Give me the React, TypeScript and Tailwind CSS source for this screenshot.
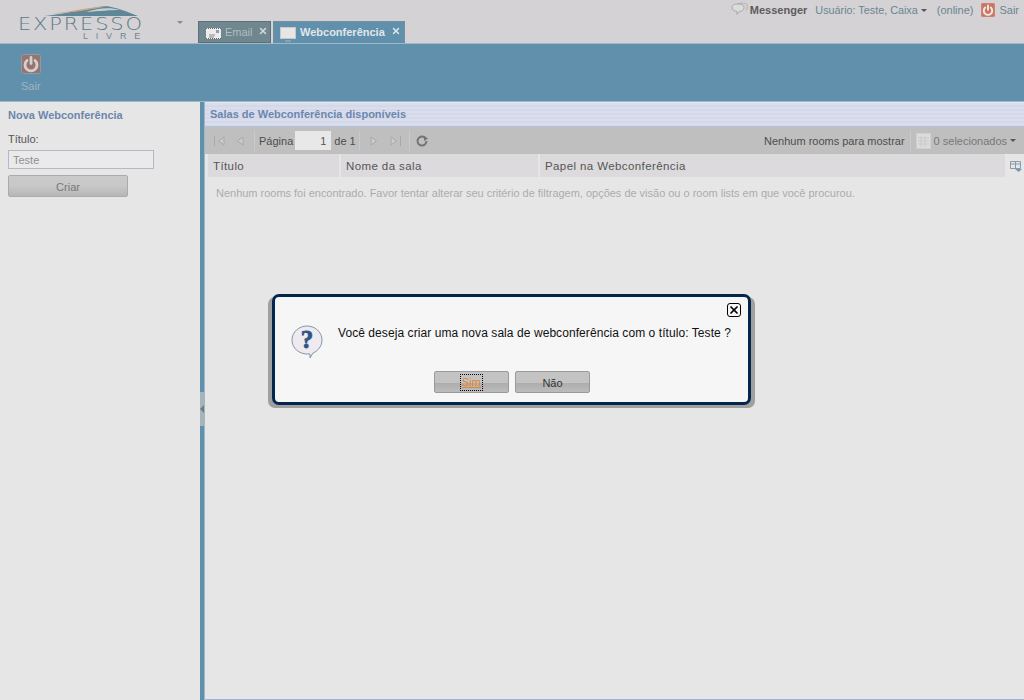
import { X } from 'lucide-react';

const font = "font-['Liberation_Sans',Arial,sans-serif]";

function PowerIcon({ size, bg, fg = '#e4dcda', edge }: { size: number; bg: string; fg?: string; edge?: string }) {
  return (
    <svg width={size} height={size} viewBox="0 0 20 20" className="shrink-0">
      <rect x="0.500" y="0.500" width="19" height="19" rx="2" fill={bg} stroke={edge ?? bg} />
      <path d="M6 6.500a6 6 0 1 0 8 0" fill="none" stroke={fg} strokeWidth="2.800" strokeLinecap="round" />
      <path d="M10 3.500v6" fill="none" stroke={fg} strokeWidth="2.800" strokeLinecap="round" />
    </svg>
  );
}

function Logo() {
  return (
    <div className="relative w-[125px] h-[38px] ml-[20px] mt-[5px] shrink-0">
      <svg width="125" height="12" viewBox="0 0 125 12" className="absolute left-0 top-0">
        <path d="M25 11 C50 8 70 3 85 1 C96 2 108 7 118 11 Z" fill="#5f8797" />
        <path d="M32 9 C52 6 72 2 88 1 C76 4 56 7 32 9 Z" fill="#cda27f" />
        <path d="M66 7 C78 3 90 2 100 5 C90 5 80 6 66 7 Z" fill="#c4d2d6" />
      </svg>
      <div className="absolute left-[-2px] top-[13px] w-[127px] text-[21px] leading-[14px] tracking-[1.800px] font-['DejaVu_Sans',sans-serif] font-extralight text-[#587a88] [transform:scaleY(0.86)] [transform-origin:left_top]">EXPRESSO</div>
      <div className="absolute left-[63px] top-[26px] text-[9px] leading-[10px] tracking-[7.800px] text-[#6d8794]">LIVRE</div>
    </div>
  );
}

function PagerIcon({ d }: { d: string }) {
  return (
    <svg width="16" height="16" viewBox="0 0 16 16" className="shrink-0">
      <path d={d} fill="#cdcccd" stroke="#a9a8a9" strokeWidth="1" />
    </svg>
  );
}

function Sep() {
  return <div className="w-px h-[20px] bg-[#cbcacb] shrink-0" />;
}

export default function App() {
  return (
    <div className={`${font} relative w-[1024px] h-[700px] overflow-hidden flex flex-col bg-[#e6e6e6] text-[12px]`}>
      {/* Top bar */}
      <header className="relative h-[43px] bg-[#d4d2d4] flex shrink-0">
        <Logo />
        <div className="ml-[32px] mt-[21px] w-0 h-0 border-x-[3px] border-x-transparent border-t-[3px] border-t-[#8a8a8a]" />
        <div className="ml-[15px] mt-[21px] flex gap-[2px] h-[22px]">
          <div className="w-[73px] bg-[#6f878f] border border-[#5e7076] flex items-center pl-[7px] text-[#b3bcc0] text-[11px]">
            <svg width="15" height="11" viewBox="0 0 15 11" className="shrink-0 mt-[3px]">
              <rect width="15" height="11" fill="#ececec" />
              <path d="M0 0.500h15M0 10.500h15" stroke="#8a5a66" strokeDasharray="1 1" />
              <rect x="10" y="2" width="3" height="3" fill="#8aa0b8" />
              <path d="M3 7h6M3 9h5" stroke="#888" />
            </svg>
            <span className="ml-[4px]">Email</span>
            <X size={10} strokeWidth={3.5} className="ml-[5px] mb-[3px] text-[#d5d9db]" />
          </div>
          <div className="w-[132px] bg-[#6190ac] border border-[#75909b] border-b-0 flex items-center pl-[6px] text-[#e2e6ea] font-bold text-[11px]">
            <svg width="17" height="15" viewBox="0 0 17 15" className="shrink-0 mt-[3px]">
              <rect x="0.500" y="0.500" width="15" height="11" fill="#e6e6e6" stroke="#c8c8c8" />
              <path d="M5 14h6" stroke="#a9bac4" />
            </svg>
            <span className="ml-[3px]">Webconferência</span>
            <X size={10} strokeWidth={3.5} className="ml-[6px] mb-[3px] text-[#e2e6ea]" />
          </div>
        </div>
        <div className="absolute right-[5px] top-[2px] flex items-center h-[16px] text-[#6b8493] text-[11px]">
          <svg width="17" height="16" viewBox="0 0 17 16" className="shrink-0">
            <path d="M6 2.500C7 1 15 0.500 16 2.500c0.500 2 0.500 5-1 6" fill="none" stroke="#b5b5b5" />
            <path d="M1 5c0-2 2-3 6-3s6 1 6 3.500-2 4-5 4l-2 3 0-3C3 9 1 8 1 5z" fill="#dcdcdc" stroke="#a9a9a9" />
          </svg>
          <span className="ml-[2px] font-bold text-[#5c5c5c]">Messenger</span>
          <span className="ml-[8px] text-[10.800px]">Usuário: Teste, Caixa</span>
          <span className="ml-[3px] w-0 h-0 border-x-[3px] border-x-transparent border-t-[3px] border-t-[#555]" />
          <span className="ml-[10px]">(online)</span>
          <span className="ml-[8px]"><PowerIcon size={14} bg="#cc7565" fg="#f1e7e3" /></span>
          <span className="ml-[4px]">Sair</span>
        </div>
      </header>

      {/* Module toolbar */}
      <div className="h-[59px] shrink-0 bg-[#6190ac] border-y border-[#9db8ca] pl-[21px] pt-[10px]">
        <PowerIcon size={20} bg="#96746f" fg="#d6cfce" edge="#8f9ba4" />
        <div className="text-[#9cb6c6] mt-[5px] text-[11px] leading-[14px]">Sair</div>
      </div>

      {/* Body */}
      <div className="flex-1 flex min-h-0">
        <aside className="w-[200px] shrink-0 bg-[#e6e6e6] pl-[8px] pt-[6px] text-[11px]">
          <h2 className="font-bold text-[#6c87ad] leading-[14px]">Nova Webconferência</h2>
          <div className="mt-[10px] text-[#555] leading-[14px]">Título:</div>
          <div className="mt-[4px] w-[146px] h-[19px] border border-[#b6b6c6] bg-[#eaeaea] text-[#8f8f8f] leading-[18px] pl-[4px]">Teste</div>
          <div className="mt-[6px] w-[120px] h-[22px] rounded-[2px] border border-[#ababab] bg-[linear-gradient(#cbcaca_0%,#c9c8c8_50%,#b8b7b7_100%)] text-center text-[#777] pt-[1px] leading-[21px]">Criar</div>
        </aside>

        {/* Splitter */}
        <div className="relative w-[5px] shrink-0 bg-[#6190ac] border-r border-r-[#9db8ca]">
          <div className="absolute left-0 top-[290px] w-[5px] h-[34px] bg-[#a6b4bb] flex items-center">
            <div className="w-0 h-0 border-y-[4px] border-y-transparent border-r-[4px] border-r-[#6e7c84]" />
          </div>
        </div>

        <main className="flex-1 min-w-0 flex flex-col border-b border-[#9fb4da] text-[11px]">
          <div className="h-[24px] shrink-0 mt-[1px] border-b border-[#b7c3dc] bg-[repeating-linear-gradient(#dadeec_0px,#dadeec_2px,#d3d8ea_2px,#d3d8ea_4px)] text-[#6c87ad] font-bold leading-[22px] pl-[5px]">
            Salas de Webconferência disponíveis
          </div>
          <div className="h-[27px] shrink-0 bg-[#c0bfc0] flex items-center pl-[7px] pr-[8px] text-[#4d4d4d]">
            <PagerIcon d="M2.500 3v10M12 4v8L6.500 8z" />
            <div className="w-[4px]" />
            <PagerIcon d="M11 4v8L5.500 8z" />
            <div className="w-[6px]" />
            <Sep />
            <span className="ml-[4px] mt-[1px]">Página</span>
            <div className="ml-[2px] w-[36px] h-[19px] bg-[#e8e8e8] text-right pr-[5px] leading-[20px] text-[#555]">1</div>
            <span className="ml-[3px] mt-[1px]">de 1</span>
            <div className="w-[3px]" />
            <Sep />
            <div className="w-[6px]" />
            <PagerIcon d="M5 4v8L10.500 8z" />
            <div className="w-[5px]" />
            <PagerIcon d="M4 4v8L9.500 8zM13.500 3v10" />
            <div className="w-[6px]" />
            <Sep />
            <svg width="14" height="14" viewBox="0 0 14 14" className="ml-[5px] shrink-0">
              <path d="M11.500 7a4.500 4.500 0 1 1-2-3.700" fill="none" stroke="#747474" strokeWidth="2" />
              <path d="M9 0.800l4 2.700-4 2.500z" fill="#747474" transform="translate(0 1)" />
            </svg>
            <span className="ml-auto mt-[1px]">Nenhum rooms para mostrar</span>
            <div className="ml-[5px]"><Sep /></div>
            <svg width="15" height="16" viewBox="0 0 15 16" className="ml-[5px] shrink-0">
              <rect x="0.500" y="0.500" width="14" height="15" fill="#dcdcdc" stroke="#cfcfcf" />
              <path d="M2 5h11M2 8h11M2 11h11M5 3v11M9 3v11" stroke="#c9c9c9" />
            </svg>
            <span className="ml-[3px] mt-[1px] text-[#777]">0 selecionados</span>
            <span className="ml-[3px] w-0 h-0 border-x-[3px] border-x-transparent border-t-[3px] border-t-[#555]" />
          </div>
          <div className="h-[24px] shrink-0 bg-[#e6e6e6] flex text-[#555] text-[11.500px] leading-[24px] tracking-[0.4px] pl-[3px] pb-[1px]">
            <div className="w-[131px] bg-[#dcdadc] pl-[5px] mr-[2px]">Título</div>
            <div className="w-[197px] bg-[#dcdadc] pl-[5px] mr-[2px]">Nome da sala</div>
            <div className="flex-1 bg-[#dcdadc] pl-[5px] mr-[2px]">Papel na Webconferência</div>
            <div className="w-[17px] flex items-center justify-center">
              <svg width="12" height="12" viewBox="0 0 12 12">
                <path d="M0.500 1.500h10v7h-10zM0.500 4h10M5.500 1.500v7" fill="none" stroke="#8a9aa6" />
                <path d="M5 9h7l-3.500 3z" fill="#6a9bc8" />
              </svg>
            </div>
          </div>
          <div className="pl-[11px] pt-[8px] text-[#acacac] leading-[14px] tracking-[-0.015px]">
            Nenhum rooms foi encontrado. Favor tentar alterar seu critério de filtragem, opções de visão ou o room lists em que você procurou.
          </div>
        </main>
      </div>

      {/* Confirm dialog */}
      <div className="absolute left-[272px] top-[294px] w-[479px] h-[111px] rounded-[7px] border-[3px] border-[#03264d] bg-[#f6f6f6] shadow-[-4px_3px_0_0_#a0a0a0,1px_3px_0_0_#a0a0a0,4px_3px_0_0_#a0a0a0]">
        <div className="absolute right-[7px] top-[6px] w-[14px] h-[14px] rounded-[3px] border border-black flex items-center justify-center">
          <X size={12} strokeWidth={3.5} className="text-black" />
        </div>
        <svg width="32" height="34" viewBox="0 0 32 34" className="absolute left-[16px] top-[28px]">
          <path d="M16 1C8 1 1 7 1 15s7 14 15 14c1 0 2 0 3 0l0 4 3-5c5-2 9-7 9-13C31 7 24 1 16 1z" fill="#eeeaf0" stroke="#7e97a8" strokeWidth="1" />
          <text x="16" y="23" textAnchor="middle" fontFamily="Liberation Serif, serif" fontWeight="700" fontSize="25" fill="#2f5585" stroke="#2f5585" strokeWidth="0.800">?</text>
        </svg>
        <div className="absolute left-[63px] top-[28px] text-[12px] tracking-[0.07px] leading-[16px] text-[#111] whitespace-nowrap">
          Você deseja criar uma nova sala de webconferência com o título: Teste ?
        </div>
        <div className="absolute left-[159px] top-[74px] flex gap-[6px] text-[11px]">
          <div className="w-[75px] h-[22px] rounded-[2px] border border-[#9a9a9a] bg-[linear-gradient(#c4c3c3_0%,#c4c3c3_55%,#aeadad_56%,#bdbcbc_100%)] flex items-center justify-center pt-[1px]">
            <span className="border border-dotted border-black px-[1px] leading-[15px] text-[#e8832a] underline">Sim</span>
          </div>
          <div className="w-[75px] h-[22px] rounded-[2px] border border-[#9a9a9a] bg-[linear-gradient(#c4c3c3_0%,#c4c3c3_55%,#aeadad_56%,#bdbcbc_100%)] flex items-center justify-center pt-[2px] text-[#333]">
            Não
          </div>
        </div>
      </div>
    </div>
  );
}
